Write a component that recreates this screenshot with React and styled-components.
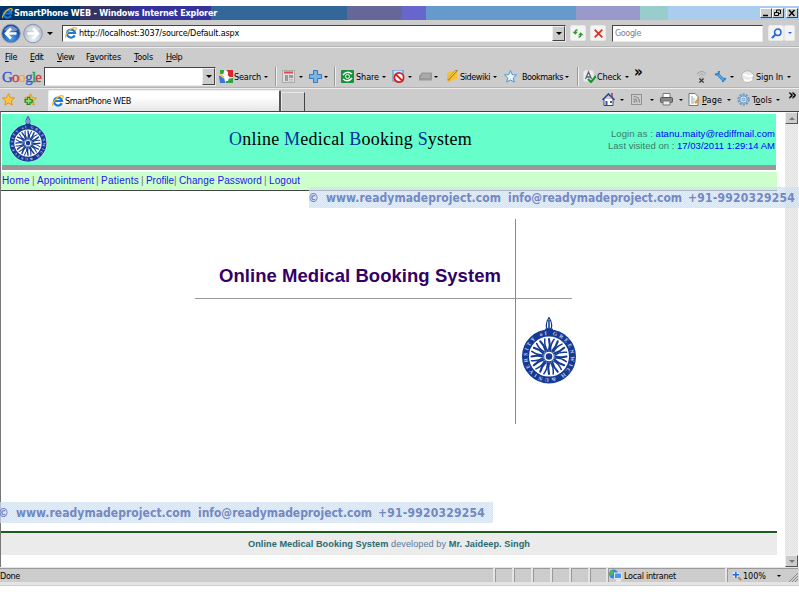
import React, { useLayoutEffect, useRef, useState } from "react";
import styled, { createGlobalStyle, css } from "styled-components";

const GlobalStyle = createGlobalStyle`
  * { box-sizing: border-box; }
  body { margin: 0; background: #fff; overflow: hidden; }
`;

const ui = `"DejaVu Sans Condensed", "DejaVu Sans", sans-serif`;
const arial = `"Liberation Sans", sans-serif`;

const Window = styled.div`
  position: relative;
  width: 799px;
  height: 596px;
  padding-top: 6px;
  display: flex;
  flex-direction: column;
  overflow: hidden;
  background: #fff;
  font: 9px/12px ${ui};
  color: #000;
`;

const Label = styled.span`
  display: block;
  flex: none;
  width: ${(p) => p.$w}px;
  margin-left: ${(p) => p.$ml || 0}px;
  white-space: pre;
  u { text-underline-offset: 1px; }
`;

/* A label whose letter spacing is adjusted so it fills a given width. */
function FitText({ width, ml, children }) {
  const ref = useRef(null);
  const [spacing, setSpacing] = useState(0);
  useLayoutEffect(() => {
    const node = ref.current;
    const natural = node.getBoundingClientRect().width;
    setSpacing((width - natural) / node.textContent.length);
  }, [width]);
  return (
    <Label $w={width} $ml={ml}>
      <span ref={ref} style={{ letterSpacing: spacing }}>{children}</span>
    </Label>
  );
}

const TitleBar = styled.header`
  flex: none;
  height: 14px;
  padding: 0 1px 0 2px;
  display: flex;
  align-items: center;
  color: #fff;
  font-weight: bold;
  background: linear-gradient(
    90deg,
    #003366 0 80px, #333366 80px 130px, #333399 130px 211px, #336699 211px 347px,
    #666699 347px 402px, #6666cc 402px 426px, #6699cc 426px 576px,
    #9999cc 576px 640px, #99cccc 640px 668px, #aaccee 668px
  );
`;

const Spacer = styled.div`
  flex: 1;
`;

const WindowButton = styled.span`
  width: 12px;
  height: 10px;
  margin-left: ${(p) => p.$ml || 0}px;
  background: #ccc;
  border: 1px solid;
  border-color: #fff #444 #444 #fff;
  display: flex;
  svg { display: block; }
`;

const Bar = styled.div`
  flex: none;
  height: ${(p) => p.$h}px;
  padding-left: ${(p) => p.$pl || 0}px;
  display: flex;
  align-items: center;
  background: #ccc;
  ${(p) => p.$rule && css`
    border-bottom: 1px solid #b4b4b4;
    box-shadow: 0 1px 0 #eee;
    position: relative;
  `}
`;

const Field = styled.div`
  flex: none;
  width: ${(p) => p.$w}px;
  height: ${(p) => p.$h}px;
  margin-left: ${(p) => p.$ml || 0}px;
  padding-left: ${(p) => p.$pl || 0}px;
  display: flex;
  align-items: center;
  background: #fff;
  border: 1px solid;
  border-color: #444 #e8e8e8 #e8e8e8 #444;
  color: ${(p) => (p.$muted ? "#808080" : "#000")};
`;

const DropButton = styled.span`
  flex: none;
  width: 13px;
  align-self: stretch;
  margin-left: auto;
  display: flex;
  align-items: center;
  justify-content: center;
  background: #ccc;
  border: 1px solid;
  border-color: #eee #444 #444 #eee;
`;

const FlatButton = styled.span`
  flex: none;
  width: ${(p) => p.$w}px;
  height: 16px;
  margin-left: ${(p) => p.$ml || 0}px;
  display: flex;
  align-items: center;
  justify-content: center;
  background: #f4f4f4;
  border: 1px solid #e8e8e8;
  border-radius: 2px;
`;

const Caret = styled.i`
  flex: none;
  width: 0;
  height: 0;
  margin-left: ${(p) => p.$ml || 0}px;
  border: ${(p) => p.$s || 2}px solid transparent;
  border-bottom: 0;
  border-top-color: ${(p) => p.$c || "#000"};
`;

const ToolItem = styled.div`
  flex: none;
  width: ${(p) => p.$w}px;
  margin-left: ${(p) => p.$ml || 0}px;
  display: flex;
  align-items: center;
  svg { flex: none; display: block; }
`;

const Divider = styled.i`
  flex: none;
  width: 2px;
  height: 19px;
  background: #999;
  border-right: 1px solid #eee;
  margin-right: ${(p) => p.$mr}px;
`;

const Chevrons = styled.span`
  font: bold 15px/10px ${ui};
  width: ${(p) => p.$w}px;
  transform: translateY(-5px);
`;

const GoogleLogo = styled.div`
  flex: none;
  width: 42px;
  font: 15px/16px "Liberation Serif", serif;
  -webkit-text-stroke: 0.3px;
`;
const Hue = styled.span`
  color: ${(p) => p.$c};
`;

const Tab = styled.div`
  flex: none;
  align-self: flex-end;
  width: 233px;
  height: 21px;
  margin-left: 11px;
  padding-left: 3px;
  display: flex;
  align-items: center;
  background: linear-gradient(#fff 30%, #e6e6e6);
  border: 1px solid #eee;
  border-right: 2px solid #555;
  border-bottom: 0;
  border-radius: 2px 2px 0 0;
`;
const NewTab = styled.div`
  align-self: flex-end;
  width: 24px;
  height: 19px;
  border: 1px solid #e8e8e8;
  border-right: 1px solid #444;
  border-bottom: 0;
`;

const Viewport = styled.div`
  flex: none;
  height: 456px;
  display: flex;
  border-top: 1px solid #444;
  border-left: 1px solid #777;
`;
const Page = styled.main`
  width: 776px;
  padding-top: 2px;
  display: flex;
  flex-direction: column;
  font-family: ${arial};
`;
const Banner = styled.div`
  flex: none;
  width: 774px;
  height: 56px;
  margin-left: 1px;
  padding-left: 6px;
  display: flex;
  background: #66ffcc;
  border-bottom: 5px solid #999;
  svg { flex: none; margin-top: 2px; }
`;
const BannerTitle = styled.h1`
  margin: 13px 0 0 181px;
  font: 18px/24px "Liberation Serif", serif;
  b { font-weight: normal; color: #003399; }
`;
const Account = styled.div`
  margin: 14px 1px 0 auto;
  font: 9.5px/12px ${arial};
  color: #3c7a6a;
  display: flex;
  flex-direction: column;
  align-items: flex-end;
  a { color: #0000ff; }
`;
const Nav = styled.nav`
  flex: none;
  height: 19px;
  margin-top: 2px;
  padding-left: 1px;
  background: #ccffcc;
  border-bottom: 1px solid #444;
  font: 10px/17px ${arial};
  color: #777;
  display: flex;
  a { color: #2020ee; }
`;

const Splash = styled.section`
  flex: 1;
  padding: 28px 0 0 194px;
  display: grid;
  align-content: start;
  grid-template-columns: 321px 56px;
  grid-template-rows: 80px 125px;
`;
const SplashTitle = styled.h2`
  margin: 0;
  padding: 45px 0 0 24px;
  border-right: 1px solid #888;
  border-bottom: 1px solid #999;
  font: bold 18.5px/24px ${arial};
  color: #330066;
`;
const Corner = styled.div`
  border-bottom: 1px solid #999;
`;
const Stem = styled.div`
  border-right: 1px solid #888;
`;
const Seal = styled.div`
  padding: 18px 0 0 5px;
`;

const Footer = styled.footer`
  flex: none;
  height: 24px;
  margin-bottom: 12px;
  padding-left: 247px;
  border-top: 2px solid #1c5c1c;
  background: #ebebeb;
  font: 9.2px/22px ${arial};
  color: #5a7aa0;
  b { color: #2a6a70; }
`;

const Scrollbar = styled.div`
  width: 13px;
  margin-left: 8px;
  display: flex;
  flex-direction: column;
  justify-content: space-between;
  background: repeating-conic-gradient(#e2e2e2 0 25%, #eee 0 50%) 0 0 / 2px 2px;
`;
const ScrollButton = styled.span`
  height: 12px;
  display: flex;
  align-items: center;
  justify-content: center;
  background: #ccc;
  border: 1px solid;
  border-color: #eee #555 #555 #eee;
  i { transform: ${(p) => (p.$up ? "rotate(180deg)" : "none")}; }
`;

const StatusBar = styled.div`
  flex: none;
  height: 19px;
  padding: 1px 0 3px;
  display: flex;
  background: #e4e4e4;
  border-bottom: 1px solid #ccc;
`;
const Pane = styled.div`
  flex: none;
  width: ${(p) => p.$w}px;
  margin-right: 2px;
  padding-left: ${(p) => p.$pl || 0}px;
  display: flex;
  align-items: center;
  background: #ccc;
  border-top: 1px solid #999;
  border-left: ${(p) => (p.$first ? 0 : 1)}px solid #999;
`;

const Watermark = styled.div`
  position: absolute;
  left: ${(p) => p.$x}px;
  top: ${(p) => p.$y}px;
  width: ${(p) => p.$w}px;
  height: 21px;
  background: repeating-conic-gradient(rgba(196, 214, 252, 0.72) 0 25%, rgba(216, 234, 250, 0.72) 0 50%) 0 0 / 2px 2px;
  color: #7488c0;
  font: bold 12px/22px ${ui};
  overflow: hidden;
  white-space: pre;
  display: flex;
`;

const rays = Array.from({ length: 24 }, (_, i) => i * 15);

function Emblem({ width, height, id }) {
  return (
    <svg width={width} height={height} viewBox="0 0 56 67">
      <circle cx="28" cy="39.5" r="27.5" fill="#fff" />
      <path d="M28 .5C25 5 24.500 8 26 12h4c1.500-4 1-7-2-11.500Z" fill="#fff" stroke="#143a94" strokeWidth="1.300" />
      <path d="M28 3v9M24 12.500h8" stroke="#143a94" strokeWidth="1.500" />
      <circle cx="28" cy="39.500" r="23.500" fill="none" stroke="#143a94" strokeWidth="7" />
      <g fill="none" stroke="#143a94" strokeLinecap="round">
        {rays.map((a, i) => (
          <path
            key={a}
            d={i % 2 ? "M28 33Q26 28 28.500 21.500" : "M28 33Q29.500 28 28 22"}
            strokeWidth={i % 2 ? 1.5 : 2.1}
            transform={`rotate(${a} 28 39.500)`}
          />
        ))}
      </g>
      <circle cx="28" cy="39.500" r="5.300" fill="#fff" stroke="#143a94" strokeWidth="1" />
      <circle cx="28" cy="39.500" r="3.300" fill="#143a94" />
      <path id={id} d="M28 61.200A21.700 21.700 0 1 1 28.100 61.200" fill="none" />
      <text fill="#c4d0ee" fontSize="5.500" fontWeight="bold" fontFamily="Liberation Serif, serif">
        <textPath href={`#${id}`} textLength="134">UNIVERSITY of GREENWICH &amp;</textPath>
      </text>
    </svg>
  );
}

const IeIcon = ({ size = 12 }) => (
  <svg width={size} height={size} viewBox="0 0 12 12" fill="none">
    <path d="M9.700 8.200A4 4 0 1 1 10 6H3" stroke="#1c7ad8" strokeWidth="2.200" />
    <path d="M1 10.800C-1 8 7-1 11 1c.8.800-.2 2-.8 2.800" stroke="#f2b52a" strokeWidth="1.200" />
  </svg>
);
const NavCircle = ({ on }) => (
  <svg width="20" height="21" viewBox="0 0 20 21">
    <defs>
      <radialGradient id={on ? "on" : "off"} cy=".75">
        <stop offset="0" stopColor={on ? "#4aa4f4" : "#f0f4fa"} />
        <stop offset="1" stopColor={on ? "#184fa4" : "#b8c2d0"} />
      </radialGradient>
    </defs>
    <circle cx="10" cy="10.500" r="9.300" fill={`url(#${on ? "on" : "off"})`} stroke="#8d98ac" />
    <path d="M3 7Q10-1 17 7Q10 10 3 7" fill="#fff" opacity=".4" />
    <path
      d={on ? "M10 5.500L5 10.500L10 15.500M5.500 10.500H15.500" : "M10 5.500L15 10.500L10 15.500M14.500 10.500H4.500"}
      fill="none" stroke="#fff" strokeWidth="2.600"
    />
  </svg>
);
const Star = ({ w = 13, fill, stroke, plus }) => (
  <svg width={w} height={w} viewBox="0 0 14 14">
    <path d="M7 .8L8.900 5L13.400 5.400L10 8.500L11 13L7 10.700L3 13L4 8.500L.6 5.400L5.100 5Z" fill={fill} stroke={stroke} />
    {plus && <path d="M5 4v9M.5 8.500h9" stroke="#188c28" strokeWidth="4" />}
    {plus && <path d="M5 5.500v6M2 8.500h6" stroke="#8ee07c" strokeWidth="1.800" />}
  </svg>
);
const Svg = ({ w = 13, h = 13, children }) => (
  <svg width={w} height={h} viewBox="0 0 13 13" fill="none" preserveAspectRatio="none">{children}</svg>
);
const SearchIcon = () => (
  <Svg w={14}>
    <rect x="1" width="12" height="13" fill="#e8eef8" />
    <path d="M1 0h4L4 4H1Z" fill="#2da436" /><path d="M7 0h6v7H9Z" fill="#d8262c" />
    <path d="M0 6h4l2 7H1Z" fill="#3c74dc" /><path d="M7 9l6-1v5H6Z" fill="#31a244" />
    <path d="M1 4.500L5 8" stroke="#f8c634" strokeWidth="2" />
    <circle cx="6.500" cy="3" r="2" fill="#fff" /><path d="M4.500 6h5l-1 5h-2Z" fill="#fff" />
  </Svg>
);
const NewsIcon = () => (
  <Svg>
    <rect x=".5" y=".5" width="12" height="12" fill="#ddd" stroke="#aaa" />
    <path d="M2 2.500h9" stroke="#d45044" strokeWidth="2" />
    <path d="M3 5h3v6H3M7 5h4v3H7Z" fill="#999" /><path d="M7 9.500h4M7 11h4" stroke="#bbb" />
  </Svg>
);
const PlusIcon = () => (
  <Svg><path d="M4.500.5h4v4h4v4h-4v4h-4v-4h-4v-4h4Z" fill="#7cb4e4" stroke="#3878b8" /></Svg>
);
const ShareIcon = () => (
  <Svg>
    <rect width="13" height="13" rx="1" fill="#17923b" />
    <path d="M2 5Q6 0 11 4M11 8Q7 13 2 9" stroke="#fff" strokeWidth="1.500" />
    <circle cx="6.500" cy="6.500" r="2" stroke="#fff" />
  </Svg>
);
const BlockIcon = () => (
  <Svg>
    <rect x="1" y="0" width="10" height="11" fill="#cfe3fa" stroke="#4c8cd0" />
    <circle cx="7" cy="7.500" r="4.600" fill="#fff" stroke="#d42222" strokeWidth="1.800" />
    <path d="M4 4.500l6 6" stroke="#d42222" strokeWidth="1.800" />
  </Svg>
);
const CardIcon = () => (
  <Svg><path d="M3 2.500h10v8H0V6Z" fill="#999" /><path d="M2 7h9M3 5h8" stroke="#bbb" /></Svg>
);
const SidewikiIcon = () => (
  <Svg w={12}>
    <path d="M1 3Q6 0 12 2V9Q7 9 5 12L1 12Z" fill="#f8c230" /><path d="M2 10L12 0" stroke="#c06a10" strokeWidth="2" />
    <path d="M2 9.500L11 1" stroke="#ffe680" />
  </Svg>
);
const CheckIcon = () => (
  <Svg>
    <rect x=".5" y=".5" width="10" height="11" rx="2" fill="#eee" stroke="#ddd" />
    <path d="M2.500 9L5.500 2L8.500 9M3.500 7h4" stroke="#567" strokeWidth="1.300" />
    <path d="M5 9l3 3l5-6" stroke="#169a26" strokeWidth="2.200" />
  </Svg>
);
const WifiIcon = () => (
  <Svg w={11}>
    <path d="M1 4Q6.500-1 12 4M3 6Q6.500 2 10 6M5 8Q6.500 6 8 8" stroke="#999" />
    <path d="M4 8.500l5 4M9 8.500l-5 4" stroke="#333" strokeWidth="1.500" />
  </Svg>
);
const WrenchIcon = () => (
  <Svg>
    <path d="M3 3.500L10.500 11" stroke="#2c86cc" strokeWidth="3" />
    <path d="M1 4Q5 6 5 1M9 12Q8 8 12 9" stroke="#2c86cc" strokeWidth="2" />
    <path d="M4 4.500l6 6" stroke="#8fc8f0" />
  </Svg>
);
const GlobeIcon = () => (
  <Svg><circle cx="6.500" cy="6.500" r="5.800" fill="#e8e8e8" stroke="#aaa" strokeWidth=".8" /><path d="M2 4Q8 8 12 5M3 10Q8 12 11 9" stroke="#fff" strokeWidth="2" /></Svg>
);
const HomeIcon = () => (
  <Svg>
    <path d="M2 6v6.500h9V6" fill="#fff" stroke="#446" /><path d="M.5 7L6.500 1L12.500 7" stroke="#2a4a9c" strokeWidth="1.700" />
    <path d="M10 0v4" stroke="#b34" strokeWidth="1.500" /><path d="M3.500 8h2v4h-2M8 8h2v2H8Z" fill="#3558a8" />
  </Svg>
);
const RssIcon = () => (
  <Svg w={11} h={11}>
    <rect x=".6" y=".6" width="11.800" height="11.800" stroke="#888" />
    <path d="M3 3Q10 3 10 10M3 6Q7 6 7 10" stroke="#888" strokeWidth="1.300" /><circle cx="4" cy="9" r="1.200" fill="#888" />
  </Svg>
);
const PrintIcon = () => (
  <Svg>
    <path d="M3 .5h7V5H3Z" fill="#fff" stroke="#777" /><rect x=".5" y="4.500" width="12" height="5" rx="1" fill="#888" stroke="#555" />
    <path d="M3 8h7v4H3Z" fill="#eee" stroke="#777" />
  </Svg>
);
const PageIcon = () => (
  <Svg>
    <path d="M1 .5h6l3 3v9H1Z" fill="#fff" stroke="#777" /><path d="M3 4h2M3 6h4M3 8h3M3 10h3" stroke="#8aa" />
    <path d="M7 10l4-4" stroke="#d89a50" strokeWidth="2.500" />
  </Svg>
);
const GearIcon = () => (
  <Svg>
    <circle cx="6.500" cy="6.500" r="5.200" stroke="#6f9cc8" strokeWidth="2" strokeDasharray="2.200 1.070" />
    <circle cx="6.500" cy="6.500" r="3.600" fill="#dceaf8" stroke="#6f9cc8" strokeWidth="1.200" /><circle cx="6.500" cy="6.500" r="1.500" fill="#ccc" stroke="#6f9cc8" />
  </Svg>
);
const RefreshIcon = () => (
  <Svg w={12} h={11}>
    <path d="M6 2.500Q3.500 2 3.500 5M7 10.500Q9.500 11 9.500 8" stroke="#28a030" strokeWidth="1.700" />
    <path d="M.5 4.500h6L3.500 8ZM6.500 8.500h6L9.500 5Z" fill="#28a030" />
  </Svg>
);
const StopIcon = () => (
  <Svg w={9} h={9}><path d="M1 1l11 11M12 1L1 12" stroke="#d83024" strokeWidth="2.500" /></Svg>
);
const Lens = ({ s = 11, c = "#2468d8", plus }) => (
  <Svg w={s} h={s}>
    {!plus && <><circle cx="8" cy="5" r="3.800" stroke={c} strokeWidth="1.800" /><path d="M5 8L1 12" stroke={c} strokeWidth="2.300" /></>}
    {plus && <><circle cx="5" cy="5" r="4.300" fill="#d8eaff" /><path d="M5 1v8M1 5h8" stroke={c} strokeWidth="2" /><path d="M8 8l4 4" stroke="#b08040" strokeWidth="2.200" /></>}
  </Svg>
);
const NetworkIcon = () => (
  <Svg>
    <circle cx="4.500" cy="5" r="4.500" fill="#3c84e0" /><path d="M1 2Q4 0 5 3L3 6L1 7Z" fill="#54b84c" />
    <rect x="5.500" y="4" width="7" height="5.500" fill="#4d94f0" stroke="#e0eaf8" /><path d="M7 11.500h5" stroke="#eee" strokeWidth="2" />
  </Svg>
);

function Tool({ w, icon, label, lw, ml = 2, caret }) {
  return (
    <ToolItem $w={w}>
      {icon}
      {label && <FitText width={lw} ml={ml}>{label}</FitText>}
      {caret !== undefined && <Caret $ml={caret} />}
    </ToolItem>
  );
}

function Mark({ x, y, w, indent }) {
  return (
    <Watermark $x={x} $y={y} $w={w}>
      <FitText width={11} ml={indent}>©</FitText>
      <FitText width={175} ml={7}>www.readymadeproject.com</FitText>
      <FitText width={174} ml={7}>info@readymadeproject.com</FitText>
      <FitText width={107} ml={6}>+91-9920329254</FitText>
    </Watermark>
  );
}

const menus = [["File", 0, 5, 12], ["Edit", 0, 13, 13], ["View", 0, 14, 17], ["Favorites", 1, 12, 35], ["Tools", 0, 13, 19], ["Help", 0, 13, 16]];

const links = [["Home", 28], ["Appointment", 57], ["Patients", 38], ["Profile", 28], ["Change Password", 83], ["Logout", 31]];

export default function App() {
  return (
    <Window>
      <GlobalStyle />
      <TitleBar>
        <IeIcon size={11} />
        <FitText width={203} ml={1}>SmartPhone WEB - Windows Internet Explorer</FitText>
        <Spacer />
        <WindowButton><svg width="10" height="8"><path d="M2 6.500h5" stroke="#000" strokeWidth="1.500" /></svg></WindowButton>
        <WindowButton><svg width="10" height="8" fill="none" stroke="#000"><path d="M3.500 3V1h4v3.500H6M1.500 3.500h4v3h-4Z" /></svg></WindowButton>
        <WindowButton $ml={2}><svg width="10" height="8"><path d="M2 1l5.500 6M7.500 1L2 7" stroke="#000" strokeWidth="1.400" /></svg></WindowButton>
      </TitleBar>

      <Bar $h={27} $pl={1} $rule>
        <ToolItem $w={20}><NavCircle on /></ToolItem>
        <ToolItem $w={20} $ml={2}><NavCircle /></ToolItem>
        <Caret $ml={4} $s={3} />
        <Field $w={504} $h={17} $ml={9} $pl={2}>
          <IeIcon size={12} />
          <FitText width={160} ml={2}>http://localhost:3037/source/Default.aspx</FitText>
          <DropButton><Caret $s={3} /></DropButton>
        </Field>
        <FlatButton $w={16} $ml={4}><RefreshIcon /></FlatButton>
        <FlatButton $w={16} $ml={4}><StopIcon /></FlatButton>
        <Field $w={151} $h={17} $ml={6} $pl={2} $muted><FitText width={26}>Google</FitText></Field>
        <FlatButton $w={16} $ml={5}><Lens /></FlatButton>
        <FlatButton $w={11}><Caret $c="#2468d8" /></FlatButton>
      </Bar>

      <Bar $h={19}>
        {menus.map(([t, k, ml, w]) => (
          <FitText key={t} width={w} ml={ml}>{t.slice(0, k)}<u>{t[k]}</u>{t.slice(k + 1)}</FitText>
        ))}
      </Bar>

      <Bar $h={22} $pl={2} $rule>
        <GoogleLogo>
          <FitText width={39}>
            <Hue $c="#2858d0">G</Hue><Hue $c="#d83030">o</Hue><Hue $c="#e8b020">o</Hue><Hue $c="#2858d0">g</Hue><Hue $c="#20a040">l</Hue><Hue $c="#d83030">e</Hue>
          </FitText>
        </GoogleLogo>
        <Field $w={172} $h={19}><DropButton><Caret $s={3} /></DropButton></Field>
        <ToolItem $w={3} />
        <Tool w={56} icon={<SearchIcon />} label="Search" lw={27} ml={1} caret={3} />
        <Divider $mr={5} />
        <Tool w={27} icon={<NewsIcon />} caret={4} />
        <Tool w={25} icon={<PlusIcon />} caret={2} />
        <Divider $mr={5} />
        <Tool w={51} icon={<ShareIcon />} label="Share" lw={23} caret={3} />
        <Tool w={27} icon={<BlockIcon />} caret={3} />
        <Tool w={27} icon={<CardIcon />} caret={2} />
        <Tool w={58} icon={<SidewikiIcon />} label="Sidewiki" lw={30} caret={3} />
        <Tool w={73} icon={<Star fill="#e8f6ff" stroke="#3a94d4" />} label="Bookmarks" lw={41} ml={5} caret={2} />
        <Divider $mr={4} />
        <Tool w={51} icon={<CheckIcon />} label="Check" lw={24} ml={1} caret={4} />
        <Chevrons $w={62}>»</Chevrons>
        <Tool w={18} icon={<WifiIcon />} />
        <Tool w={27} icon={<WrenchIcon />} caret={3} />
        <Tool w={57} icon={<GlobeIcon />} label="Sign In" lw={27} caret={4} />
      </Bar>

      <Bar $h={23} $pl={2}>
        <Tool w={22} icon={<Star fill="#ffc83c" stroke="#e08c18" />} />
        <Tool w={13} icon={<Star fill="#ffd04c" stroke="#e08c18" plus />} />
        <Tab><IeIcon size={12} /><FitText width={66} ml={1}>SmartPhone WEB</FitText></Tab>
        <NewTab />
        <Spacer />
        <Tool w={29} icon={<HomeIcon />} caret={5} />
        <Tool w={29} icon={<RssIcon />} caret={8} />
        <Tool w={28} icon={<PrintIcon />} caret={6} />
        <Tool w={49} icon={<PageIcon />} label={<><u>P</u>age</>} lw={20} ml={1} caret={5} />
        <Tool w={51} icon={<GearIcon />} label={<>T<u>o</u>ols</>} lw={20} caret={4} />
        <Chevrons $w={11}>»</Chevrons>
      </Bar>

      <Viewport>
        <Page>
          <Banner>
            <Emblem width={40} height={46} id="sealSmall" />
            <BannerTitle>
              <FitText width={243}><b>O</b>nline <b>M</b>edical <b>B</b>ooking <b>S</b>ystem</FitText>
            </BannerTitle>
            <Account>
              <FitText width={164}>Login as : <a>atanu.maity@rediffmail.com</a></FitText>
              <FitText width={167}>Last visited on : <a>17/03/2011 1:29:14 AM</a></FitText>
            </Account>
          </Banner>
          <Nav>
            {links.map(([t, w], i) => (
              <React.Fragment key={t}>
                {i > 0 && <FitText width={2} ml={i === 4 ? 0 : 2}>|</FitText>}
                <FitText width={w} ml={i === 0 ? 0 : 3}><a>{t}</a></FitText>
              </React.Fragment>
            ))}
          </Nav>
          <Splash>
            <SplashTitle><FitText width={282}>Online Medical Booking System</FitText></SplashTitle>
            <Corner />
            <Stem />
            <Seal><Emblem width={56} height={67} id="sealLarge" /></Seal>
          </Splash>
          <Footer>
            <FitText width={282}><b>Online Medical Booking System</b> developed by <b>Mr. Jaideep. Singh</b></FitText>
          </Footer>
        </Page>
        <Scrollbar>
          <ScrollButton $up><Caret $s={3} $c="#777" /></ScrollButton>
          <ScrollButton><Caret $s={3} $c="#777" /></ScrollButton>
        </Scrollbar>
      </Viewport>

      <StatusBar>
        <Pane $w={493} $first><FitText width={20}>Done</FitText></Pane>
        {[17, 17, 17, 17, 17, 16].map((w, i) => <Pane key={i} $w={w} />)}
        <Pane $w={117}><NetworkIcon /><FitText width={52} ml={2}>Local intranet</FitText></Pane>
        <Pane $w={71} $pl={4}>
          <Lens s={10} plus />
          <FitText width={23} ml={1}>100%</FitText>
          <Caret $ml={11} />
          <Spacer />
          <svg width="10" height="12" stroke="#888"><path d="M1 12L10 3M4 12L10 6M7 12L10 9" /></svg>
        </Pane>
      </StatusBar>

      <Mark x={309} y={187} w={490} indent={-1} />
      <Mark x={0} y={502} w={493} indent={-2} />
    </Window>
  );
}
